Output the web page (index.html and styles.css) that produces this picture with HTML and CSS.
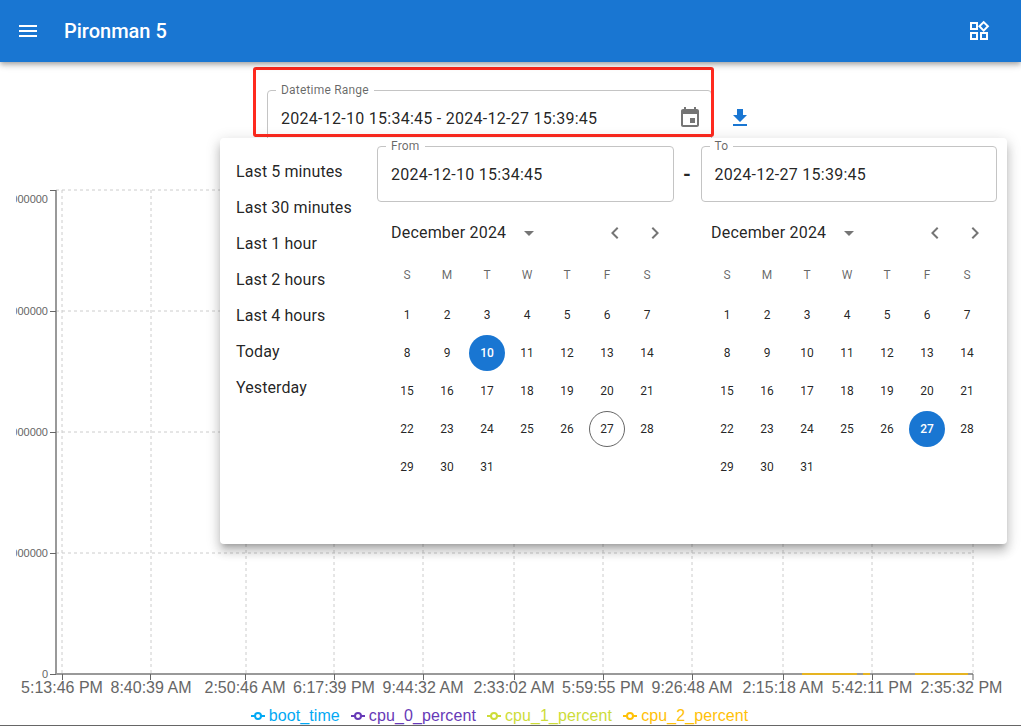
FILE: index.html
```html
<!DOCTYPE html>
<html>
  <head>
    <title>Pironman 5</title>
    <meta name="viewport" content="width=device-width, initial-scale=1.0"/>
    <link rel="stylesheet" href="styles.css">
  </head>
  <body>

    <header class="app-bar">
      <svg class="icon menu-icon" viewBox="0 0 24 24"><path d="M3 18h18v-2H3v2zm0-5h18v-2H3v2zm0-7v2h18V6H3z"/></svg>
      <h1 class="app-title">Pironman 5</h1>
      <svg class="icon widgets-icon" viewBox="0 0 24 24"><path d="m16.66 4.52 2.83 2.83-2.83 2.83-2.83-2.83 2.83-2.83M9 5v4H5V5h4m10 10v4h-4v-4h4M9 15v4H5v-4h4m7.66-13.31L11 7.34 16.66 13l5.66-5.66-5.66-5.65zM11 3H3v8h8V3zm10 10h-8v8h8v-8zm-10 0H3v8h8v-8z"/></svg>
    </header>

    <main class="content">
      <div class="toolbar">
        <div class="field range-field">
          <span class="field-label">Datetime Range</span>
          <span class="field-value">2024-12-10 15:34:45 - 2024-12-27 15:39:45</span>
          <svg class="icon event-icon" viewBox="0 0 24 24"><path d="M17 12h-5v5h5v-5zM16 1v2H8V1H6v2H5c-1.11 0-1.99.9-1.99 2L3 19c0 1.1.89 2 2 2h14c1.1 0 2-.9 2-2V5c0-1.1-.9-2-2-2h-1V1h-2zm3 18H5V8h14v11z"/></svg>
        </div>
        <button class="download-button">
          <svg class="icon" viewBox="0 0 24 24"><path d="M19 9h-4V3H9v6H5l7 7 7-7zM5 18v2h14v-2H5z"/></svg>
        </button>
        <div class="highlight"></div>
      </div>

      <svg class="chart" viewBox="0 146 1021 560">
        <defs>
          <clipPath id="y-labels"><rect x="16" y="146" width="60" height="560"/></clipPath>
        </defs>

        <g class="grid">
          <line x1="56" y1="190" x2="973" y2="190"/>
          <line x1="56" y1="311" x2="973" y2="311"/>
          <line x1="56" y1="432" x2="973" y2="432"/>
          <line x1="56" y1="553" x2="973" y2="553"/>
          <line x1="62" y1="190" x2="62" y2="674"/>
          <line x1="151" y1="190" x2="151" y2="674"/>
          <line x1="246" y1="190" x2="246" y2="674"/>
          <line x1="334" y1="190" x2="334" y2="674"/>
          <line x1="423" y1="190" x2="423" y2="674"/>
          <line x1="514" y1="190" x2="514" y2="674"/>
          <line x1="603" y1="190" x2="603" y2="674"/>
          <line x1="692" y1="190" x2="692" y2="674"/>
          <line x1="783" y1="190" x2="783" y2="674"/>
          <line x1="872" y1="190" x2="872" y2="674"/>
          <line x1="973" y1="190" x2="973" y2="674"/>
        </g>

        <g class="axis">
          <line class="axis-line" x1="56" y1="190" x2="56" y2="675"/>
          <line class="axis-line" x1="55" y1="674" x2="973" y2="674"/>
          <line x1="50" y1="190.5" x2="56" y2="190.5"/>
          <line x1="50" y1="311.5" x2="56" y2="311.5"/>
          <line x1="50" y1="432.5" x2="56" y2="432.5"/>
          <line x1="50" y1="553.5" x2="56" y2="553.5"/>
          <line x1="50" y1="674.5" x2="56" y2="674.5"/>
          <line x1="62.5" y1="674" x2="62.5" y2="680"/>
          <line x1="150.5" y1="674" x2="150.5" y2="680"/>
          <line x1="245.5" y1="674" x2="245.5" y2="680"/>
          <line x1="334.5" y1="674" x2="334.5" y2="680"/>
          <line x1="423.5" y1="674" x2="423.5" y2="680"/>
          <line x1="514.5" y1="674" x2="514.5" y2="680"/>
          <line x1="603.5" y1="674" x2="603.5" y2="680"/>
          <line x1="692.5" y1="674" x2="692.5" y2="680"/>
          <line x1="783.5" y1="674" x2="783.5" y2="680"/>
          <line x1="872.5" y1="674" x2="872.5" y2="680"/>
          <line x1="973" y1="674" x2="973" y2="680"/>
        </g>

        <g class="series">
          <line x1="802" y1="674" x2="857" y2="674"/>
          <line x1="863" y1="674" x2="870" y2="674"/>
          <line x1="915" y1="674" x2="968" y2="674"/>
        </g>

        <g class="y-labels" clip-path="url(#y-labels)">
          <text x="48" y="203">4000000000</text>
          <text x="48" y="315">3000000000</text>
          <text x="48" y="436">2000000000</text>
          <text x="48" y="557">1000000000</text>
          <text x="48" y="678">0</text>
        </g>

        <g class="x-labels">
          <text x="62" y="693">5:13:46 PM</text>
          <text x="151" y="693">8:40:39 AM</text>
          <text x="245" y="693">2:50:46 AM</text>
          <text x="334" y="693">6:17:39 PM</text>
          <text x="423" y="693">9:44:32 AM</text>
          <text x="514" y="693">2:33:02 AM</text>
          <text x="603" y="693">5:59:55 PM</text>
          <text x="692" y="693">9:26:48 AM</text>
          <text x="783" y="693">2:15:18 AM</text>
          <text x="872" y="693">5:42:11 PM</text>
          <text x="961.5" y="693">2:35:32 PM</text>
        </g>
      </svg>

      <ul class="legend">
        <li class="legend-item boot-time"><svg class="legend-mark" viewBox="0 0 14 14"><line x1="0" y1="7" x2="14" y2="7"/><circle cx="7" cy="7" r="3"/></svg>boot_time</li>
        <li class="legend-item cpu-0"><svg class="legend-mark" viewBox="0 0 14 14"><line x1="0" y1="7" x2="14" y2="7"/><circle cx="7" cy="7" r="3"/></svg>cpu_0_percent</li>
        <li class="legend-item cpu-1"><svg class="legend-mark" viewBox="0 0 14 14"><line x1="0" y1="7" x2="14" y2="7"/><circle cx="7" cy="7" r="3"/></svg>cpu_1_percent</li>
        <li class="legend-item cpu-2"><svg class="legend-mark" viewBox="0 0 14 14"><line x1="0" y1="7" x2="14" y2="7"/><circle cx="7" cy="7" r="3"/></svg>cpu_2_percent</li>
      </ul>

      <section class="picker">
        <ul class="shortcuts">
          <li>Last 5 minutes</li>
          <li>Last 30 minutes</li>
          <li>Last 1 hour</li>
          <li>Last 2 hours</li>
          <li>Last 4 hours</li>
          <li>Today</li>
          <li>Yesterday</li>
        </ul>

        <div class="picker-main">
          <div class="range-inputs">
            <div class="field">
              <span class="field-label">From</span>
              <span class="field-value">2024-12-10 15:34:45</span>
            </div>
            <span class="range-dash">-</span>
            <div class="field">
              <span class="field-label">To</span>
              <span class="field-value">2024-12-27 15:39:45</span>
            </div>
          </div>

          <div class="calendars">
            <div class="calendar">
              <div class="calendar-head">
                <span class="month">December 2024</span>
                <svg class="icon caret" viewBox="0 0 24 24"><path d="M7 10l5 5 5-5z"/></svg>
                <svg class="icon chevron" viewBox="0 0 24 24"><path d="M15.41 7.41 14 6l-6 6 6 6 1.41-1.41L10.83 12z"/></svg>
                <svg class="icon chevron" viewBox="0 0 24 24"><path d="M10 6 8.59 7.41 13.17 12l-4.58 4.59L10 18l6-6z"/></svg>
              </div>
              <div class="weekdays"><span>S</span><span>M</span><span>T</span><span>W</span><span>T</span><span>F</span><span>S</span></div>
              <div class="days">
                <span>1</span><span>2</span><span>3</span><span>4</span><span>5</span><span>6</span><span>7</span>
                <span>8</span><span>9</span><span class="selected">10</span><span>11</span><span>12</span><span>13</span><span>14</span>
                <span>15</span><span>16</span><span>17</span><span>18</span><span>19</span><span>20</span><span>21</span>
                <span>22</span><span>23</span><span>24</span><span>25</span><span>26</span><span class="today">27</span><span>28</span>
                <span>29</span><span>30</span><span>31</span>
              </div>
            </div>

            <div class="calendar">
              <div class="calendar-head">
                <span class="month">December 2024</span>
                <svg class="icon caret" viewBox="0 0 24 24"><path d="M7 10l5 5 5-5z"/></svg>
                <svg class="icon chevron" viewBox="0 0 24 24"><path d="M15.41 7.41 14 6l-6 6 6 6 1.41-1.41L10.83 12z"/></svg>
                <svg class="icon chevron" viewBox="0 0 24 24"><path d="M10 6 8.59 7.41 13.17 12l-4.58 4.59L10 18l6-6z"/></svg>
              </div>
              <div class="weekdays"><span>S</span><span>M</span><span>T</span><span>W</span><span>T</span><span>F</span><span>S</span></div>
              <div class="days">
                <span>1</span><span>2</span><span>3</span><span>4</span><span>5</span><span>6</span><span>7</span>
                <span>8</span><span>9</span><span>10</span><span>11</span><span>12</span><span>13</span><span>14</span>
                <span>15</span><span>16</span><span>17</span><span>18</span><span>19</span><span>20</span><span>21</span>
                <span>22</span><span>23</span><span>24</span><span>25</span><span>26</span><span class="selected">27</span><span>28</span>
                <span>29</span><span>30</span><span>31</span>
              </div>
            </div>
          </div>
        </div>
      </section>
    </main>

  </body>
</html>
```

FILE: styles.css
```css
html, body {
    height: 100%;
}

body {
    margin: 0;
    overflow: hidden;

    font-family: Roboto, sans-serif;
    color: rgba(0, 0, 0, .87);

    background: #fff;
}

ul {
    margin: 0;
    padding: 0;
    list-style: none;
}

.icon {
    display: block;
    width: 24px;
    height: 24px;
    flex: none;
    fill: currentColor;
}

/* app bar */

.app-bar {
    position: relative;
    z-index: 2;

    display: flex;
    align-items: center;
    height: 62px;
    padding: 0 18px 0 16px;
    box-sizing: border-box;

    color: #fff;

    background: #1976d2;
    box-shadow: 0 2px 4px -1px rgba(0, 0, 0, .2), 0 4px 5px 0 rgba(0, 0, 0, .14), 0 1px 10px 0 rgba(0, 0, 0, .12);
}

.app-title {
    margin: 0 0 0 24px;
    flex: 1;

    font-size: 20px;
    font-weight: 500;
}

.widgets-icon {
    margin-right: 12px;
}

/* datetime field */

.content {
    position: relative;
    height: 664px;
    box-sizing: border-box;
    border-bottom: 1px solid #666;
}

.toolbar {
    position: relative;

    display: flex;
    justify-content: center;
    align-items: center;
    gap: 8px;
    padding: 28px 0 0 6px;
}

.field {
    position: relative;

    display: flex;
    flex: 1;
    align-items: center;
    height: 56px;
    padding: 0 13px;
    box-sizing: border-box;

    border: 1px solid #c4c4c4;
    border-radius: 4px;
}

.range-field {
    flex: none;
    justify-content: space-between;
    width: 445px;
    padding-right: 9px;
}

.field-label {
    position: absolute;
    top: -8px;
    left: 8px;
    padding: 0 5px;

    font-size: 12px;
    line-height: 15px;
    letter-spacing: .2px;
    color: rgba(0, 0, 0, .6);

    background: #fff;
}

.field-value {
    font-size: 16px;
    letter-spacing: .27px;
}

.event-icon {
    color: rgba(0, 0, 0, .54);
}

.download-button {
    display: flex;
    justify-content: center;
    align-items: center;
    width: 40px;
    height: 40px;
    padding: 0;

    border: none;
    color: #1976d2;

    background: none;
}

.highlight {
    position: absolute;
    top: 5px;
    left: 253px;
    width: 461px;
    height: 70px;
    box-sizing: border-box;

    border: 3px solid #ff2a1f;
    border-radius: 3px;
}

/* chart */

.chart {
    display: block;
    width: 1021px;
    height: 560px;
}

.grid line {
    stroke: #ccc;
    stroke-dasharray: 3 3;
}

.axis line {
    stroke: #666;
}

.axis .axis-line {
    stroke: #999;
    stroke-width: 2;
}

.series line {
    stroke: #e6b422;
    stroke-width: 2;
}

.y-labels text {
    font-family: "Liberation Sans", sans-serif;
    font-size: 11px;
    text-anchor: end;
    fill: #666;
}

.x-labels text {
    font-family: "Liberation Sans", sans-serif;
    font-size: 16px;
    text-anchor: middle;
    fill: #666;
}

.legend {
    display: flex;
    justify-content: center;
    gap: 11px;
    height: 19px;
    padding-right: 22px;

    font-family: "Liberation Sans", sans-serif;
    font-size: 16px;
    line-height: 19px;
    letter-spacing: .1px;
}

.legend-item {
    display: flex;
    align-items: center;
    gap: 4px;
}

.legend-mark {
    width: 14px;
    height: 14px;
    fill: #fff;
    stroke: currentColor;
    stroke-width: 2;
}

.boot-time {
    color: #03a9f4;
}

.cpu-0 {
    color: #673ab7;
}

.cpu-1 {
    color: #cddc39;
}

.cpu-2 {
    color: #ffc107;
}

/* picker popover */

.picker {
    position: absolute;
    top: 76px;
    left: 220px;

    display: flex;
    width: 787px;
    height: 406px;
    box-sizing: border-box;
    padding-top: 8px;

    border-radius: 4px;

    background: #fff;
    box-shadow: 0 5px 5px -3px rgba(0, 0, 0, .2), 0 8px 10px 1px rgba(0, 0, 0, .14), 0 3px 14px 2px rgba(0, 0, 0, .12);
}

.shortcuts {
    width: 157px;
    padding: 8px 0 0 16px;
    box-sizing: border-box;

    font-size: 16px;
    letter-spacing: .1px;
}

.shortcuts li {
    height: 36px;
    line-height: 36px;
}

.range-inputs {
    display: flex;
    align-items: center;
    width: 620px;
}

.range-dash {
    width: 27px;

    font-size: 20px;
    font-weight: 700;
    text-align: center;
}

.calendars {
    display: flex;
    gap: 32px;
    padding: 10px 0 0 10px;
}

.calendar {
    width: 288px;
}

.calendar-head {
    display: flex;
    align-items: center;
    height: 40px;
    padding-left: 4px;

    color: rgba(0, 0, 0, .54);
}

.month {
    font-size: 16px;
    letter-spacing: .2px;
    color: rgba(0, 0, 0, .87);
}

.caret {
    margin-top: 1px;
    margin-left: 11px;
    margin-right: auto;
}

.chevron {
    margin-top: 1px;
    padding: 8px;
}

.weekdays, .days {
    display: grid;
    grid-template-columns: repeat(7, 40px);
    justify-items: center;
    align-items: center;
    font-size: 12px;
}

.weekdays {
    height: 38px;
    margin: 4px 0 2px;
    color: rgba(0, 0, 0, .6);
}

.days {
    grid-auto-rows: 38px;
}

.days span {
    display: flex;
    justify-content: center;
    align-items: center;
    width: 36px;
    height: 36px;
    box-sizing: border-box;
    border-radius: 50%;
}

.days .selected {
    font-weight: 500;
    color: #fff;
    background: #1976d2;
}

.days .today {
    border: 1px solid rgba(0, 0, 0, .6);
}
```
